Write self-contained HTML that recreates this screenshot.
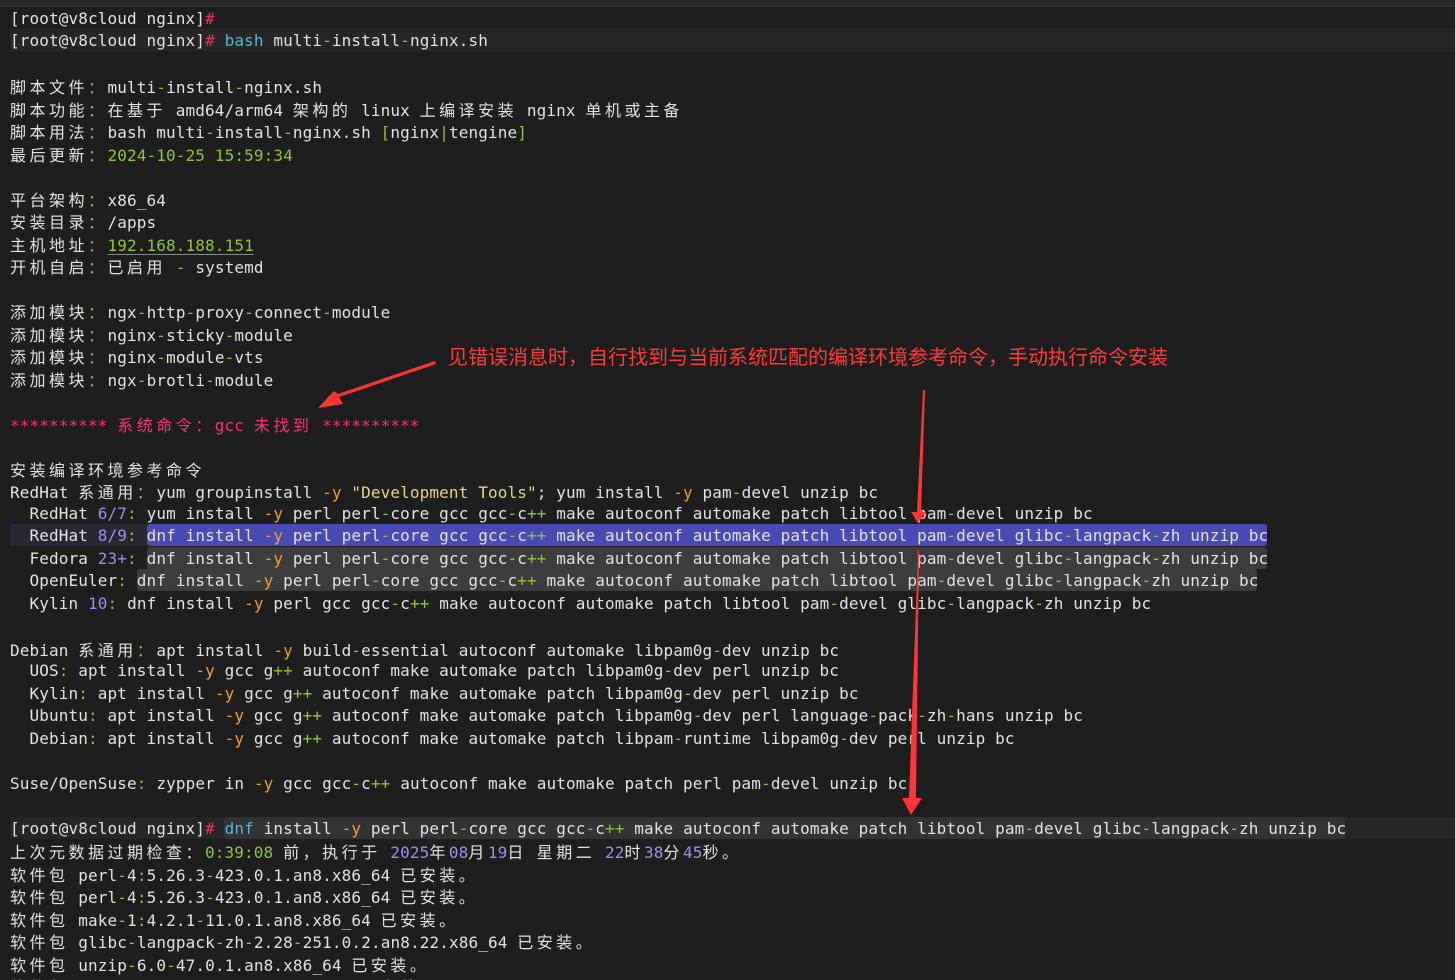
<!DOCTYPE html>
<html><head><meta charset="utf-8"><style>
html,body{margin:0;padding:0;background:#1e1e1e;width:1455px;height:980px;overflow:hidden}
body{position:relative;font-family:"DejaVu Sans Mono","Noto Sans CJK SC",monospace;font-size:16px;color:#e2e2e2;letter-spacing:0.12px}
.top{position:absolute;left:0;top:0;width:1455px;height:6px;background:#2b2b2b;border-bottom:1px solid #333}
.hl{position:absolute;left:10px;height:22px;background:#262626}
.sel{position:absolute;height:22px;border-radius:3px}
#t{position:absolute;left:10px;top:7.5px;line-height:22.5px}
#t div{height:22.5px;white-space:pre}
.z{letter-spacing:3.5px;font-family:"Noto Sans CJK SC","DejaVu Sans Mono",monospace}
.c{color:#8fc53a}.g{color:#8fc53a}.o{color:#f0a030}.p{color:#a48af2}.y{color:#e3d58a}.r{color:#e63060}.b{color:#4fb8dc}.k{color:#ff2d7d}
.u{text-decoration:underline;text-decoration-color:#888;text-underline-offset:3px}
.note{position:absolute;left:448px;top:341px;font-family:"Noto Sans CJK SC",sans-serif;font-size:20px;color:#ff3a3a;letter-spacing:0px;white-space:nowrap}
</style></head><body>
<div class="top"></div>
<div class="hl" style="top:29px;width:1445px"></div>
<div class="hl" style="top:524px;width:1257px;background:#282834"></div>
<div class="sel" style="left:147px;top:524px;width:1120px;background:#4a4ab4"></div>
<div class="sel" style="left:147px;top:547px;width:1120px;background:#3c3c3c"></div>
<div class="sel" style="left:137px;top:569px;width:1120px;background:#3c3c3c"></div>
<div class="hl" style="top:817px;width:1445px"></div>
<div class="sel" style="left:224px;top:817px;width:1121px;background:#333"></div>
<div id="t"><div>[root@v8cloud nginx]<span class="r">#</span></div><div>[root@v8cloud nginx]<span class="r">#</span> <span class="b">bash</span> multi<span class="g">-</span>install<span class="g">-</span>nginx.sh</div><div></div><div><span class="z">脚本文件</span><span class="c z">：</span>multi<span class="g">-</span>install<span class="g">-</span>nginx.sh</div><div><span class="z">脚本功能</span><span class="c z">：</span><span class="z">在基于</span> amd64/arm64 <span class="z">架构的</span> linux <span class="z">上编译安装</span> nginx <span class="z">单机或主备</span></div><div><span class="z">脚本用法</span><span class="c z">：</span>bash multi<span class="g">-</span>install<span class="g">-</span>nginx.sh <span class="g">[</span>nginx<span class="g">|</span>tengine<span class="g">]</span></div><div><span class="z">最后更新</span><span class="c z">：</span><span class="g">2024-10-25 15:59:34</span></div><div></div><div><span class="z">平台架构</span><span class="c z">：</span>x86_64</div><div><span class="z">安装目录</span><span class="c z">：</span>/apps</div><div><span class="z">主机地址</span><span class="c z">：</span><span class="g u">192.168.188.151</span></div><div><span class="z">开机自启</span><span class="c z">：</span><span class="z">已启用</span> <span class="g">-</span> systemd</div><div></div><div><span class="z">添加模块</span><span class="c z">：</span>ngx<span class="g">-</span>http<span class="g">-</span>proxy<span class="g">-</span>connect<span class="g">-</span>module</div><div><span class="z">添加模块</span><span class="c z">：</span>nginx<span class="g">-</span>sticky<span class="g">-</span>module</div><div><span class="z">添加模块</span><span class="c z">：</span>nginx<span class="g">-</span>module<span class="g">-</span>vts</div><div><span class="z">添加模块</span><span class="c z">：</span>ngx<span class="g">-</span>brotli<span class="g">-</span>module</div><div></div><div class="k">********** <span class="z">系统命令：</span>gcc <span class="z">未找到</span> **********</div><div></div><div><span class="z">安装编译环境参考命令</span></div><div>RedHat <span class="z">系通用</span><span class="c z">：</span>yum groupinstall <span class="o">-y</span> <span class="y">"Development Tools"</span>; yum install <span class="o">-y</span> pam<span class="g">-</span>devel unzip bc</div><div>  RedHat <span class="p">6/7</span><span class="c">:</span> yum install <span class="o">-y</span> perl perl<span class="g">-</span>core gcc gcc<span class="g">-</span>c<span class="g">++</span> make autoconf automake patch libtool pam<span class="g">-</span>devel unzip bc</div><div>  RedHat <span class="p">8/9</span><span class="c">:</span> dnf install <span class="o">-y</span> perl perl<span class="g">-</span>core gcc gcc<span class="g">-</span>c<span class="g">++</span> make autoconf automake patch libtool pam<span class="g">-</span>devel glibc<span class="g">-</span>langpack<span class="g">-</span>zh unzip bc</div><div>  Fedora <span class="p">23+</span><span class="c">:</span> dnf install <span class="o">-y</span> perl perl<span class="g">-</span>core gcc gcc<span class="g">-</span>c<span class="g">++</span> make autoconf automake patch libtool pam<span class="g">-</span>devel glibc<span class="g">-</span>langpack<span class="g">-</span>zh unzip bc</div><div>  OpenEuler<span class="c">:</span> dnf install <span class="o">-y</span> perl perl<span class="g">-</span>core gcc gcc<span class="g">-</span>c<span class="g">++</span> make autoconf automake patch libtool pam<span class="g">-</span>devel glibc<span class="g">-</span>langpack<span class="g">-</span>zh unzip bc</div><div>  Kylin <span class="p">10</span><span class="c">:</span> dnf install <span class="o">-y</span> perl gcc gcc<span class="g">-</span>c<span class="g">++</span> make autoconf automake patch libtool pam<span class="g">-</span>devel glibc<span class="g">-</span>langpack<span class="g">-</span>zh unzip bc</div><div></div><div>Debian <span class="z">系通用</span><span class="c z">：</span>apt install <span class="o">-y</span> build<span class="g">-</span>essential autoconf automake libpam0g<span class="g">-</span>dev unzip bc</div><div>  UOS<span class="c">:</span> apt install <span class="o">-y</span> gcc g<span class="g">++</span> autoconf make automake patch libpam0g<span class="g">-</span>dev perl unzip bc</div><div>  Kylin<span class="c">:</span> apt install <span class="o">-y</span> gcc g<span class="g">++</span> autoconf make automake patch libpam0g<span class="g">-</span>dev perl unzip bc</div><div>  Ubuntu<span class="c">:</span> apt install <span class="o">-y</span> gcc g<span class="g">++</span> autoconf make automake patch libpam0g<span class="g">-</span>dev perl language<span class="g">-</span>pack<span class="g">-</span>zh<span class="g">-</span>hans unzip bc</div><div>  Debian<span class="c">:</span> apt install <span class="o">-y</span> gcc g<span class="g">++</span> autoconf make automake patch libpam<span class="g">-</span>runtime libpam0g<span class="g">-</span>dev perl unzip bc</div><div></div><div>Suse/OpenSuse<span class="c">:</span> zypper in <span class="o">-y</span> gcc gcc<span class="g">-</span>c<span class="g">++</span> autoconf make automake patch perl pam<span class="g">-</span>devel unzip bc</div><div></div><div>[root@v8cloud nginx]<span class="r">#</span> <span class="b">dnf</span> install <span class="o">-y</span> perl perl<span class="g">-</span>core gcc gcc<span class="g">-</span>c<span class="g">++</span> make autoconf automake patch libtool pam<span class="g">-</span>devel glibc<span class="g">-</span>langpack<span class="g">-</span>zh unzip bc</div><div><span class="z">上次元数据过期检查：</span><span class="g">0:39:08</span> <span class="z">前，执行于</span> <span class="p">2025</span><span class="z">年</span><span class="p">08</span><span class="z">月</span><span class="p">19</span><span class="z">日</span> <span class="z">星期二</span> <span class="p">22</span><span class="z">时</span><span class="p">38</span><span class="z">分</span><span class="p">45</span><span class="z">秒。</span></div><div><span class="z">软件包</span> perl<span class="g">-</span>4<span class="g">:</span>5.26.3<span class="g">-</span>423.0.1.an8.x86_64 <span class="z">已安装。</span></div><div><span class="z">软件包</span> perl<span class="g">-</span>4<span class="g">:</span>5.26.3<span class="g">-</span>423.0.1.an8.x86_64 <span class="z">已安装。</span></div><div><span class="z">软件包</span> make<span class="g">-</span>1<span class="g">:</span>4.2.1<span class="g">-</span>11.0.1.an8.x86_64 <span class="z">已安装。</span></div><div><span class="z">软件包</span> glibc<span class="g">-</span>langpack<span class="g">-</span>zh<span class="g">-</span>2.28<span class="g">-</span>251.0.2.an8.22.x86_64 <span class="z">已安装。</span></div><div><span class="z">软件包</span> unzip<span class="g">-</span>6.0<span class="g">-</span>47.0.1.an8.x86_64 <span class="z">已安装。</span></div><div><span class="z">软件包</span> bash<span class="g">-</span>4.4.20<span class="g">-</span>5.0.1.an8.x86_64 <span class="z">已安装。</span></div></div>
<div class="note">见错误消息时，自行找到与当前系统匹配的编译环境参考命令，手动执行命令安装</div>
<svg width="1455" height="980" style="position:absolute;left:0;top:0">
<g fill="#ff3535">
<polygon points="435,361 436,364 339,397 343,404 318,408 334,391 338,394"/>
<polygon points="923,390 925,390 921,512 926,512 918,523 911,512 917,512"/>
<polygon points="918,550 919,550 916,798 922,798 911,815 902,798 909,798"/>
</g>
</svg>
</body></html>
